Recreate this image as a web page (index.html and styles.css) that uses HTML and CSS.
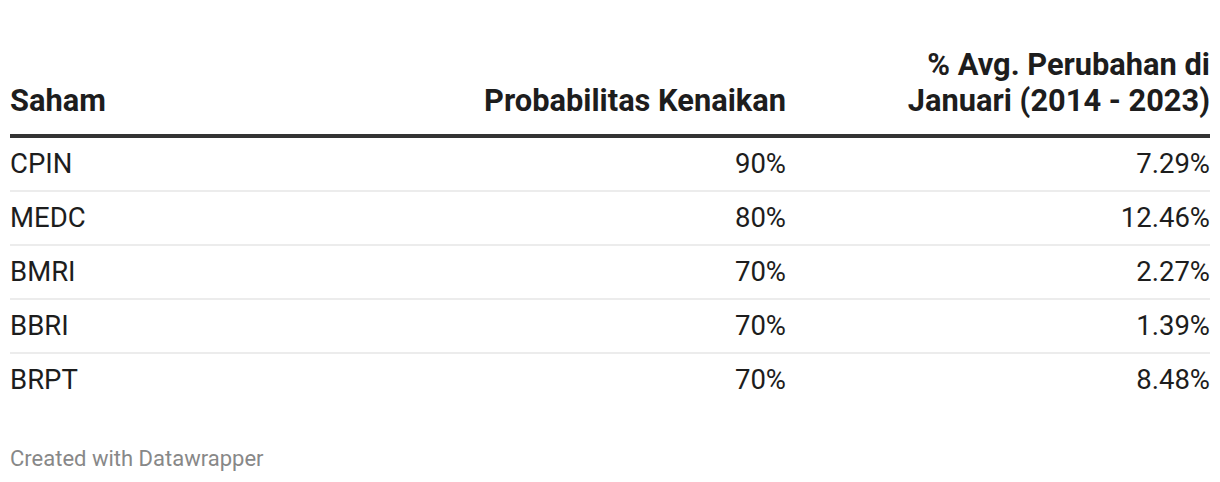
FILE: index.html
```html
<!DOCTYPE html>
<html lang="id">
<head>
<meta charset="utf-8">
<title>Saham</title>
<link rel="stylesheet" href="styles.css">
</head>
<body>
<div class="chart">
  <div class="table">
    <div class="row head">
      <div class="cell">Saham</div>
      <div class="cell num">Probabilitas Kenaikan</div>
      <div class="cell num">% Avg. Perubahan di<br>Januari (2014 - 2023)</div>
    </div>
    <div class="row">
      <div class="cell">CPIN</div>
      <div class="cell num">90%</div>
      <div class="cell num">7.29%</div>
    </div>
    <div class="row">
      <div class="cell">MEDC</div>
      <div class="cell num">80%</div>
      <div class="cell num">12.46%</div>
    </div>
    <div class="row">
      <div class="cell">BMRI</div>
      <div class="cell num">70%</div>
      <div class="cell num">2.27%</div>
    </div>
    <div class="row">
      <div class="cell">BBRI</div>
      <div class="cell num">70%</div>
      <div class="cell num">1.39%</div>
    </div>
    <div class="row last">
      <div class="cell">BRPT</div>
      <div class="cell num">70%</div>
      <div class="cell num">8.48%</div>
    </div>
  </div>
  <div class="footer">Created with Datawrapper</div>
</div>
</body>
</html>
```

FILE: styles.css
```css
html, body {
  margin: 0;
  padding: 0;
  background: #ffffff;
}

.chart {
  padding: 47px 10px 0 10px;
  font-family: Roboto, "Liberation Sans", sans-serif;
  color: #1d1d1d;
}

.row {
  display: grid;
  grid-template-columns: 1fr 340px 424px;
  font-size: 27.5px;
  line-height: 34px;
  padding: 9px 0 9px 0;
  border-bottom: 2px solid #ececec;
}

.row.head {
  font-size: 30.8px;
  line-height: 36px;
  font-weight: 700;
  padding: 0 0 15px 0;
  border-bottom: 4px solid #333333;
  align-items: end;
}

.row.last {
  border-bottom: none;
}

.cell {
  white-space: nowrap;
}

.cell.num {
  text-align: right;
}

.footer {
  margin-top: 40px;
  font-size: 22px;
  line-height: 26px;
  color: #888888;
}
```
